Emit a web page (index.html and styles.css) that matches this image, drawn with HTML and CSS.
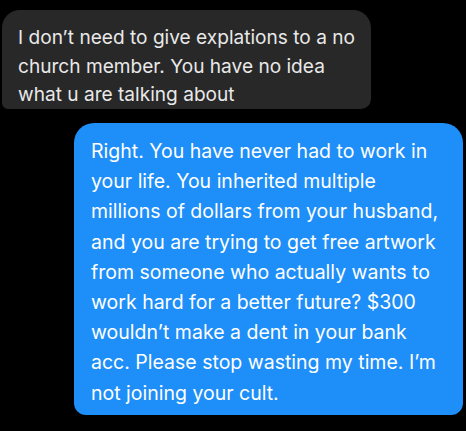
FILE: index.html
```html
<!DOCTYPE html>
<html>
<head>
<meta charset="utf-8">
<link rel="stylesheet" href="styles.css">
</head>
<body>
<div class="thread">
  <div class="bubble incoming">I don’t need to give explations to a no church member. You have no idea what u are talking about</div>
  <div class="bubble outgoing">Right. You have never had to work in your life. You inherited multiple millions of dollars from your husband, and you are trying to get free artwork from someone who actually wants to work hard for a better future? $300 wouldn’t make a dent in your bank acc. Please stop wasting my time. I’m not joining your cult.</div>
</div>
</body>
</html>
```
FILE: styles.css
```css
html, body {
  margin: 0;
  padding: 0;
  background: #000;
}
body {
  width: 466px;
  height: 431px;
  overflow: hidden;
  font-family: Inter, "Noto Sans", sans-serif;
}
.thread {
  display: flex;
  flex-direction: column;
  padding-top: 10px;
}
.bubble {
  box-sizing: border-box;
}
.incoming {
  margin-left: 2px;
  width: 369px;
  height: 99px;
  background: #282828;
  color: #e9e9e9;
  font-size: 19.1px;
  line-height: 28.5px;
  padding: 13px 14px 0 16px;
  border-radius: 18px 18px 10px 6px;
}
.outgoing {
  margin-top: 14px;
  margin-left: 74px;
  width: 389px;
  height: 292px;
  background: #1e8ef8;
  color: #fff;
  font-size: 19.5px;
  line-height: 30.2px;
  padding: 13px 24px 0 17px;
  border-radius: 20px 20px 12px 12px;
}
```
